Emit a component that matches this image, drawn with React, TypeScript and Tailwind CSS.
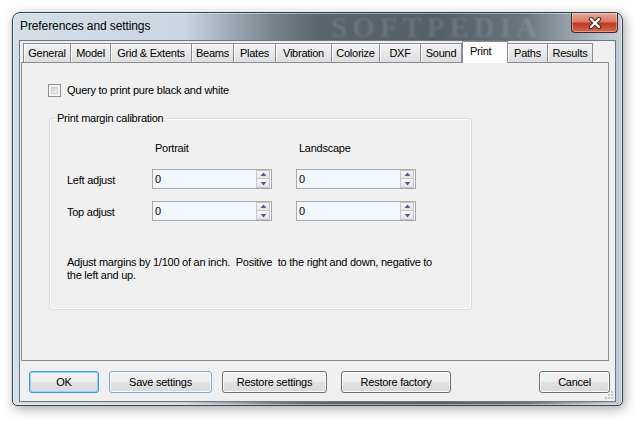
import React from "react";

const tabs = [
  { label: "General", w: 48 },
  { label: "Model", w: 40 },
  { label: "Grid & Extents", w: 81 },
  { label: "Beams", w: 42 },
  { label: "Plates", w: 42 },
  { label: "Vibration", w: 56 },
  { label: "Colorize", w: 48 },
  { label: "DXF", w: 41 },
  { label: "Sound", w: 41 },
  { label: "Print", w: 46, active: true },
  { label: "Paths", w: 40 },
  { label: "Results", w: 45 },
];

function Arrow({ up }: { up?: boolean }) {
  return (
    <svg width="7" height="5" viewBox="0 0 7 5">
      {up ? (
        <path d="M3.5 0.5 L6.5 4 L0.5 4 Z" fill="#4f6296" />
      ) : (
        <path d="M0.5 1 L6.5 1 L3.5 4.5 Z" fill="#4f6296" />
      )}
    </svg>
  );
}

function SpinInput() {
  return (
    <div className="w-[120px] h-[20px] border border-[#a9a9a9] bg-[#f0f7fe] flex items-center">
      <span className="flex-1 pl-[2px] text-[11px] leading-[13px]">0</span>
      <div className="flex flex-col w-[14px] h-[18px] mr-[1px]">
        <div className="h-[9px] border border-[#c4c4c4] bg-[linear-gradient(#f7f7f7,#e4e4e4)] flex items-center justify-center">
          <Arrow up />
        </div>
        <div className="h-[9px] border border-t-0 border-[#c4c4c4] bg-[linear-gradient(#f7f7f7,#e4e4e4)] flex items-center justify-center">
          <Arrow />
        </div>
      </div>
    </div>
  );
}

function Button({
  label,
  w,
  kind,
  className = "",
}: {
  label: string;
  w: number;
  kind?: "default" | "focus";
  className?: string;
}) {
  const border =
    kind === "default"
      ? "border-[#3b99dc] shadow-[inset_0_0_0_1px_#8fd8f8]"
      : kind === "focus"
        ? "border-[#7faad6] shadow-[inset_0_0_0_1px_#f8fbfe]"
        : "border-[#707070] shadow-[inset_0_0_0_1px_#fbfbfb]";
  return (
    <div
      style={{ width: w }}
      className={`h-[22px] rounded-[3px] border ${border} bg-[linear-gradient(#f3f3f3_0%,#ececec_50%,#e1e1e1_51%,#dadada_100%)] flex items-center justify-center text-[11px] leading-[13px] ${className}`}
    >
      {label}
    </div>
  );
}

function Row({ label }: { label: string }) {
  return (
    <div className="flex items-center">
      <span className="w-[85px] text-[11px] leading-[13px] pt-[2px]">{label}</span>
      <SpinInput />
      <div className="ml-[24px]">
        <SpinInput />
      </div>
    </div>
  );
}

export default function App() {
  return (
    <div className="w-[644px] h-[426px] bg-white pt-[12px] pl-[12px] font-['Liberation_Sans',Arial,sans-serif] tracking-[-0.25px] text-black">
      <div className="relative w-[611px] h-[394px] rounded-t-[8px] rounded-b-[5px] border border-[#3a444c] bg-[linear-gradient(90deg,#d3dee8_0%,#c9d6e2_28%,#a2afba_35%,#7a8791_42%,#59656f_50%,#525e68_70%,#69767f_84%,#a5b2bc_94%,#c4cfd9_100%)] shadow-[2px_3px_12px_rgba(0,0,0,0.35),inset_0_0_0_1px_rgba(255,255,255,0.45)] flex flex-col">
        {/* Title bar */}
        <div className="relative h-[27px] flex items-start pl-[7px] pr-[4px]">
          <span className="pt-[6px] text-[12px] leading-[14px] tracking-[-0.1px] text-black">
            Preferences and settings
          </span>
          <span className="absolute left-[318px] top-[1px] font-['Liberation_Serif',serif] font-bold text-[29px] leading-[26px] tracking-[5px] text-white/12 blur-[1px] select-none">
            SOFTPEDIA
          </span>
          <div className="ml-auto w-[47px] h-[20px] rounded-b-[4px] border border-t-0 border-[#52241c] bg-[linear-gradient(#e9a99b_0%,#d77a66_45%,#c23b22_55%,#d0664f_100%)] shadow-[inset_0_0_0_1px_rgba(255,255,255,0.35)] flex items-center justify-center">
            <svg width="14" height="12" viewBox="0 0 14 12">
              <path d="M3 2 L11 10 M11 2 L3 10" stroke="#4a2a24" strokeWidth="4.4" strokeLinecap="round" />
              <path d="M3 2 L11 10 M11 2 L3 10" stroke="#ffffff" strokeWidth="2.4" strokeLinecap="round" />
            </svg>
          </div>
        </div>

        {/* Client area */}
        <div className="relative mx-[6px] h-[362px] border border-[#6b7884] bg-[#f0f0f0] flex flex-col">
          {/* Tabs */}
          <div className="h-[21px] flex items-end pl-[3px]">
            {tabs.map((t, i) =>
              t.active ? (
                <div
                  key={t.label}
                  style={{ width: t.w }}
                  className="relative z-10 h-[22px] -mb-px border border-b-0 border-[#898c95] bg-white text-[11px] leading-[13px] pl-[7px] pt-[3px]"
                >
                  {t.label}
                </div>
              ) : (
                <div
                  key={t.label}
                  style={{ width: t.w }}
                  className={`h-[19px] border-t border-r ${i === 0 ? "border-l" : ""} border-[#898c95] bg-[linear-gradient(#f2f2f2,#dedede)] shadow-[inset_1px_1px_0_#fbfbfb] text-[11px] leading-[13px] flex items-center justify-center`}
                >
                  {t.label}
                </div>
              )
            )}
          </div>

          {/* Tab page */}
          <div className="ml-[1px] w-[588px] h-[299px] border border-[#898c95] bg-[#f0f0f0] pl-[26px] pt-[21px]">
            <div className="h-[13px] flex items-center gap-[6px]">
              <span className="w-[13px] h-[13px] border border-[#8e8f8f] bg-[#f4f4f4] p-[2px]">
                <span className="block w-full h-full bg-[linear-gradient(135deg,#c9ccd2,#f4f4f4)] border border-[#d0d2d6]" />
              </span>
              <span className="text-[11px] leading-[13px]">Query to print pure black and white</span>
            </div>

            <fieldset className="mt-[15px] ml-[1px] w-[423px] rounded-[3px] border border-[#d5dfe5] shadow-[inset_0_0_0_1px_#fdfdfd] px-[5px] pt-[17px] pb-[27px]">
              <legend className="px-[2px] text-[11px] leading-[13px]">Print margin calibration</legend>
              <div className="pl-[12px] flex flex-col">
                <div className="flex h-[13px] text-[11px] leading-[13px]">
                  <span className="w-[85px]" />
                  <span className="w-[120px] pl-[3px]">Portrait</span>
                  <span className="ml-[24px] w-[120px] pl-[3px]">Landscape</span>
                </div>
                <div className="mt-[14px]">
                  <Row label="Left adjust" />
                </div>
                <div className="mt-[12px]">
                  <Row label="Top adjust" />
                </div>
                <p className="mt-[35px] text-[11px] leading-[13px] whitespace-pre">
                  {"Adjust margins by 1/100 of an inch.  Positive  to the right and down, negative to\nthe left and up."}
                </p>
              </div>
            </fieldset>
          </div>

          {/* Buttons */}
          <div className="mt-[10px] flex items-center pl-[9px] pr-[5px]">
            <Button label="OK" w={70} kind="default" />
            <Button label="Save settings" w={103} kind="focus" className="ml-[10px]" />
            <Button label="Restore settings" w={105} className="ml-[10px]" />
            <Button label="Restore factory" w={110} className="ml-[14px]" />
            <Button label="Cancel" w={71} className="ml-auto" />
          </div>

          {/* Size grip */}
          <svg className="absolute right-[1px] bottom-[1px]" width="11" height="11" viewBox="0 0 11 11">
            {[
              [8, 2],
              [5, 5],
              [8, 5],
              [2, 8],
              [5, 8],
              [8, 8],
            ].map(([x, y]) => (
              <rect key={`${x}-${y}`} x={x} y={y} width="2" height="2" fill="#c3c7cc" />
            ))}
          </svg>
        </div>
      </div>
    </div>
  );
}
